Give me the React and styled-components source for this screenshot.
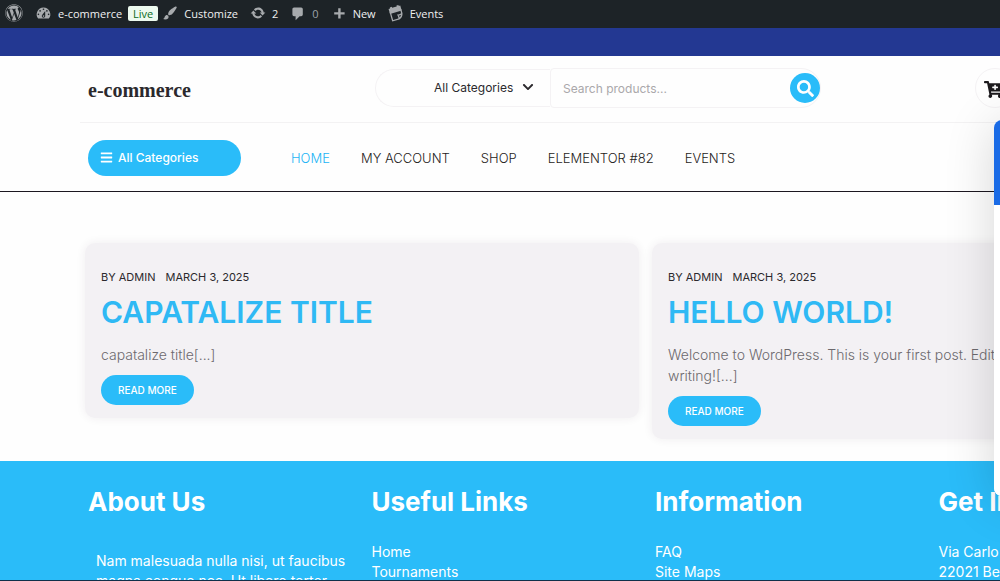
import styled, { createGlobalStyle } from 'styled-components';
import { FaWordpress, FaBars, FaChevronDown, FaSearch, FaCartPlus } from 'react-icons/fa';

const GlobalStyle = createGlobalStyle`
  * {
    box-sizing: border-box;
  }

  body {
    margin: 0;
    background: #fefefe;
    font-family: Inter, sans-serif;
    color: #2b292d;
  }

  a {
    color: inherit;
    text-decoration: none;
  }

  button,
  input,
  select {
    font-family: inherit;
  }
`;

const Page = styled.div`
  height: 100vh;
  overflow: hidden;
  border-bottom: 1px solid #10304a;
`;

const AdminBar = styled.nav`
  display: flex;
  align-items: center;
  height: 28px;
  padding: 0 0 2px 5px;
  background: #1d2327;
  color: #f0f0f1;
  font-family: 'Open Sans', sans-serif;
  font-size: 11px;
  font-weight: 500;
`;

const AdminItem = styled.a`
  display: flex;
  align-items: center;
  gap: 6px;
  margin-right: ${(props) => (props.$tight ? '4px' : '12px')};
  color: ${(props) => (props.$muted ? '#9ca2a7' : '#f0f0f1')};

  svg {
    color: #a7aaad;
    fill: currentColor;
  }
`;

const LiveBadge = styled.span`
  padding: 0 5px;
  border-radius: 2px;
  background: #edfaef;
  color: #0a6b22;
  line-height: 15px;
`;

const TopStrip = styled.div`
  height: 28px;
  background: #233892;
`;

const Container = styled.div`
  min-width: 1134px;
  margin: 0 88px;
`;

const Header = styled.header`
  border-bottom: 1px solid #1c1720;
  min-width: 1310px;
`;

const HeaderTop = styled.div`
  display: grid;
  grid-template-columns: 287px 446px auto;
  justify-content: start;
  align-items: center;
  height: 67px;
  margin-left: -8px;
  padding: 0 0 2px 8px;
  border-bottom: 1px solid #f3f2f3;
`;

const Logo = styled.a`
  font-family: 'Liberation Serif', serif;
  font-size: 20px;
  font-weight: bold;
  padding-top: 4px;
`;

const SearchForm = styled.form`
  display: flex;
  align-items: center;
`;

const CategoryField = styled.label`
  display: flex;
  align-items: center;
  justify-content: flex-end;
  gap: 8px;
  width: 175px;
  height: 38px;
  padding: 0 16px 2px 0;
  border: 1px solid #f4f2f4;
  border-right: none;
  border-radius: 19px 0 0 19px;
`;

const CategorySelect = styled.select`
  appearance: none;
  border: none;
  padding: 0;
  background: transparent;
  color: #2b292d;
  font-size: 12px;
`;

const SearchField = styled.div`
  display: flex;
  align-items: center;
  flex: 1;
  height: 40px;
  padding-left: 12px;
  border: 1px solid #f4f2f4;
  border-radius: 4px 20px 20px 4px;
`;

const SearchInput = styled.input`
  flex: 1;
  min-width: 0;
  padding: 0;
  border: none;
  outline: none;
  background: transparent;
  font-size: 12px;

  &::placeholder {
    color: #aaa8ab;
  }
`;

const SearchButton = styled.button`
  display: flex;
  align-items: center;
  justify-content: center;
  width: 30px;
  height: 30px;
  padding: 0;
  border: none;
  border-radius: 50%;
  background: #2abcf9;
  color: white;
`;

const CartButton = styled.button`
  display: flex;
  align-items: center;
  justify-content: center;
  width: 40px;
  height: 40px;
  margin-left: 154px;
  padding: 3px 4px 0 0;
  border: 1px solid #f4f2f4;
  border-radius: 50%;
  background: transparent;
  color: #1c1a1d;
`;

const HeaderNav = styled.div`
  display: flex;
  align-items: center;
  height: 68px;
  padding-top: 2px;
`;

const CategoriesButton = styled.button`
  display: flex;
  align-items: center;
  gap: 5px;
  width: 153px;
  height: 36px;
  padding: 0 12px 2px;
  margin-right: 50px;
  border: none;
  border-radius: 18px;
  background: #2abcf9;
  color: white;
  font-size: 12px;
  font-weight: 500;
`;

const Menu = styled.nav`
  display: flex;
  gap: 31px;
  font-size: 13px;
  font-weight: 300;
`;

const MenuLink = styled.a`
  color: ${(props) => (props.$active ? '#1cb4f5' : '#1f1c21')};
`;

const Posts = styled.main`
  display: grid;
  grid-template-columns: 1fr 1fr;
  align-items: start;
  gap: 13px;
  padding: 51px 0 22px;
  margin: 0 16px 0 -3px;
`;

const Card = styled.article`
  padding: 25px 16px 13px;
  border-radius: 10px;
  background: #f3f1f4;
  box-shadow: 0 0 10px rgba(60, 40, 70, 0.08);
`;

const Meta = styled.div`
  display: flex;
  gap: 10px;
  font-size: 11px;
  line-height: 18px;
`;

const Title = styled.h2`
  margin: 6px 0 12px;
  color: #2fb9f4;
  font-size: 30px;
  font-weight: 600;
  line-height: 40px;
`;

const Excerpt = styled.p`
  margin: 0 0 10px;
  padding-right: 16px;
  color: #6c696d;
  font-size: 14px;
  font-weight: 300;
  line-height: 21px;
`;

const ReadMore = styled.a`
  display: inline-flex;
  align-items: center;
  height: 30px;
  padding: 0 17px;
  border-radius: 15px;
  background: #2abcf9;
  color: white;
  font-size: 10px;
  font-weight: 500;
`;

const Footer = styled.footer`
  min-width: 1310px;
  padding: 23px 0 40px;
  background: #2abcf9;
  color: white;
`;

const FooterColumns = styled.div`
  display: grid;
  grid-template-columns: repeat(4, 1fr);
`;

const FooterTitle = styled.h3`
  margin: 0 0 22px;
  font-size: 26px;
  font-weight: 700;
  line-height: 36px;
`;

const FooterText = styled.p`
  margin: 0;
  padding: 9px 20px 0 8px;
  font-size: 14px;
  line-height: 20px;
`;

const FooterList = styled.ul`
  margin: 0;
  padding: 0;
  list-style: none;
  font-size: 14px;
  line-height: 20px;
`;

const ChatPanel = styled.aside`
  position: fixed;
  top: 120px;
  right: -344px;
  width: 350px;
  height: 376px;
  overflow: hidden;
  border-radius: 8px;
  background: white;
`;

const ChatShadow = styled(ChatPanel)`
  overflow: visible;
  box-shadow: 0 5px 50px rgba(0, 0, 0, 0.16);
`;

const ChatHeader = styled.div`
  height: 85px;
  background: #1a6be6;
`;

const DASH_PATHS = {
  dashboard:
    'M3.76 16h12.48A7.998 7.998 0 0 0 10 3a7.998 7.998 0 0 0-6.24 13zM10 4c.55 0 1 .45 1 1s-.45 1-1 1-1-.45-1-1 .45-1 1-1zM6 6c.55 0 1 .45 1 1s-.45 1-1 1-1-.45-1-1 .45-1 1-1zm8 0c.55 0 1 .45 1 1s-.45 1-1 1-1-.45-1-1 .45-1 1-1zm-5.37 5.55L12 7v6c0 1.1-.9 2-2 2s-2-.9-2-2c0-.57.24-1.08.63-1.45zM4 10c.55 0 1 .45 1 1s-.45 1-1 1-1-.45-1-1 .45-1 1-1zm12 0c.55 0 1 .45 1 1s-.45 1-1 1-1-.45-1-1 .45-1 1-1zm-5 3c0-.55-.45-1-1-1s-1 .45-1 1 .45 1 1 1 1-.45 1-1z',
  brush:
    'M18.33 3.57s.27-.8-.31-1.36c-.53-.52-1.22-.24-1.22-.24-.61.3-5.76 3.47-7.67 5.57-.86.96-2.06 3.79-1.09 4.82.92.98 3.96-.17 4.79-1 2.06-2.06 5.21-7.17 5.5-7.79zM1.4 17.65c2.37-1.56 1.46-3.41 3.23-4.64.93-.65 2.22-.62 3.08.29.63.67.8 2.57-.16 3.46-1.57 1.45-4 1.55-6.15.89z',
  update:
    'M10.2 3.28c3.53 0 6.43 2.61 6.92 6h2.08l-3.5 4-3.5-4h2.32c-.45-1.97-2.21-3.45-4.32-3.45-1.45 0-2.73.71-3.54 1.78L4.95 5.66C6.23 4.2 8.11 3.28 10.2 3.28zm-.4 13.44c-3.52 0-6.43-2.61-6.92-6H.8l3.5-4c1.17 1.33 2.33 2.67 3.5 4H5.48c.45 1.97 2.21 3.45 4.32 3.45 1.45 0 2.73-.71 3.54-1.78l1.71 1.95c-1.28 1.46-3.15 2.38-5.25 2.38z',
  comment: 'M5 3h9c1.1 0 2 .9 2 2v7c0 1.1-.9 2-2 2h-2l-5 5v-5H5c-1.1 0-2-.9-2-2V5c0-1.1.9-2 2-2z',
  plus: 'M17 9v3h-5v5H9v-5H4V9h5V4h3v5h5z',
};

function DashIcon({ name, size = 16 }) {
  return (
    <svg width={size} height={size} viewBox="0 0 20 20" aria-hidden="true">
      <path d={DASH_PATHS[name]} />
    </svg>
  );
}

// tilted calendar page with a curled corner
function EventsIcon() {
  return (
    <svg width="16" height="18" viewBox="0 0 20 22" aria-hidden="true">
      <g transform="rotate(-16 10 11)">
        <path d="M2.5 3.5h2V2.2h2.6v1.3h6V2.2h2.6v1.3h2V10h-15.2z" />
        <path
          d="M3.3 8v11.2h8.4c2.6-.8 4.6-3 5.2-5.6V8M11.6 19.2c.7-1.6.6-3.4.2-5 1.7.5 3.5.3 5.1-.6"
          fill="none"
          stroke="currentColor"
          strokeWidth="1.6"
        />
      </g>
    </svg>
  );
}

const menu = ['HOME', 'MY ACCOUNT', 'SHOP', 'ELEMENTOR #82', 'EVENTS'];

const posts = [
  { title: 'CAPATALIZE TITLE', excerpt: 'capatalize title[...]' },
  {
    title: 'HELLO WORLD!',
    excerpt: 'Welcome to WordPress. This is your first post. Edit or delete it, then start writing![...]',
  },
];

const footerLists = [
  { title: 'Useful Links', items: ['Home', 'Tournaments'] },
  { title: 'Information', items: ['FAQ', 'Site Maps'] },
  { title: 'Get In Touch', items: ['Via Carlo', '22021 Be'] },
];

function PostCard({ post }) {
  return (
    <Card>
      <Meta>
        <span>BY ADMIN</span>
        <span>MARCH 3, 2025</span>
      </Meta>
      <Title>{post.title}</Title>
      <Excerpt>{post.excerpt}</Excerpt>
      <ReadMore href="#">READ MORE</ReadMore>
    </Card>
  );
}

function App() {
  return (
    <Page>
      <GlobalStyle />
      <AdminBar>
        <AdminItem href="#" aria-label="WordPress">
          <FaWordpress size={18} />
        </AdminItem>
        <AdminItem href="#" $tight>
          <DashIcon name="dashboard" size={17} /> e-commerce <LiveBadge>Live</LiveBadge>
        </AdminItem>
        <AdminItem href="#">
          <DashIcon name="brush" /> Customize
        </AdminItem>
        <AdminItem href="#">
          <DashIcon name="update" /> 2
        </AdminItem>
        <AdminItem href="#" $muted>
          <DashIcon name="comment" /> 0
        </AdminItem>
        <AdminItem href="#">
          <DashIcon name="plus" /> New
        </AdminItem>
        <AdminItem href="#">
          <EventsIcon /> Events
        </AdminItem>
      </AdminBar>
      <TopStrip />

      <Header>
        <Container>
          <HeaderTop>
            <Logo href="#">e-commerce</Logo>
            <SearchForm onSubmit={(e) => e.preventDefault()}>
              <CategoryField>
                <CategorySelect aria-label="Category">
                  <option>All Categories</option>
                </CategorySelect>
                <FaChevronDown size={12} />
              </CategoryField>
              <SearchField>
                <SearchInput type="search" aria-label="Search products" placeholder="Search products..." />
                <SearchButton type="submit" aria-label="Search">
                  <FaSearch size={17} />
                </SearchButton>
              </SearchField>
            </SearchForm>
            <CartButton type="button" aria-label="Cart">
              <FaCartPlus size={19} />
            </CartButton>
          </HeaderTop>
          <HeaderNav>
            <CategoriesButton type="button">
              <FaBars size={13} /> All Categories
            </CategoriesButton>
            <Menu>
              {menu.map((label, i) => (
                <MenuLink key={label} href="#" $active={i === 0}>
                  {label}
                </MenuLink>
              ))}
            </Menu>
          </HeaderNav>
        </Container>
      </Header>

      <Container>
        <Posts>
          {posts.map((post) => (
            <PostCard key={post.title} post={post} />
          ))}
        </Posts>
      </Container>

      <Footer>
        <Container>
          <FooterColumns>
            <div>
              <FooterTitle>About Us</FooterTitle>
              <FooterText>Nam malesuada nulla nisi, ut faucibus magna congue nec. Ut libero tortor</FooterText>
            </div>
            {footerLists.map((list) => (
              <div key={list.title}>
                <FooterTitle>{list.title}</FooterTitle>
                <FooterList>
                  {list.items.map((item) => (
                    <li key={item}>
                      <a href="#">{item}</a>
                    </li>
                  ))}
                </FooterList>
              </div>
            ))}
          </FooterColumns>
        </Container>
      </Footer>

      <ChatShadow as="div" />
      <ChatPanel aria-label="Chat">
        <ChatHeader />
      </ChatPanel>
    </Page>
  );
}

export default App;
